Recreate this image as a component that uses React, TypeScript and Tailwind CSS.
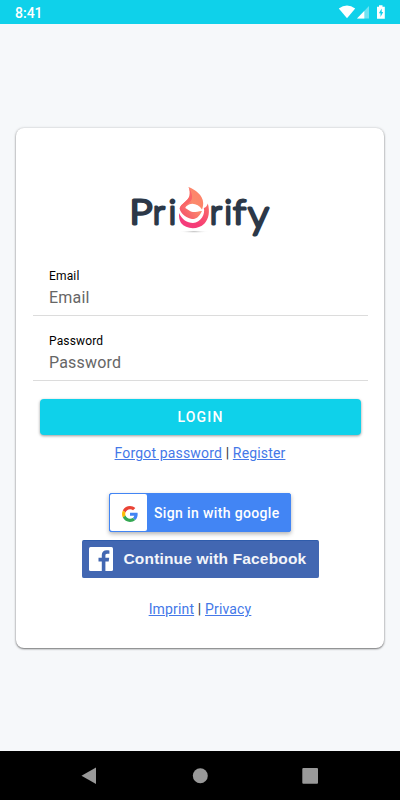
import React from 'react';

const StatusBar: React.FC = () => (
    <header className="h-6 shrink-0 flex items-center justify-between bg-[#0fd1ea] pl-[15px] pr-[14px] text-white">
        <span className="text-sm leading-6 pt-[2px] font-medium">8:41</span>
        <svg width="48" height="16" viewBox="0 0 48 16" fill="white">
            <path d="M0.8 4.6Q9 -1.8 17.2 4.6L9 14.3Z" />
            <path d="M19 14.5L31 2V14.5Z" opacity=".4" />
            <path d="M19 14.5L26.3 7V14.5Z" />
            <path fillRule="evenodd" d="M39 2.8H41V1.2H44.5V2.8H46.8V14.8H39ZM43.7 4.6L40.9 9.3H42.5V13L45.2 8H43.7Z" />
        </svg>
    </header>
);

const Logo: React.FC = () => (
    <svg className="mx-auto" width="144" height="60" viewBox="128 182 144 60">
        <defs>
            <linearGradient id="flame" x1="1" y1="0" x2="0" y2="1">
                <stop offset="0" stopColor="#ff7f68" />
                <stop offset=".45" stopColor="#fb8a6c" />
                <stop offset="1" stopColor="#f4486c" />
            </linearGradient>
            <linearGradient id="bowl" x1="1" y1="0" x2="0" y2="1">
                <stop offset="0" stopColor="#fa7266" />
                <stop offset=".6" stopColor="#f63c75" />
                <stop offset="1" stopColor="#f33b80" />
            </linearGradient>
            <radialGradient id="shade">
                <stop offset="0" stopColor="#bbb" />
                <stop offset="1" stopColor="#fff" stopOpacity="0" />
            </radialGradient>
        </defs>
        <g
            className="font-['Lato',sans-serif] font-light"
            fontSize="33"
            fill="#2c3848"
            stroke="#2c3848"
            strokeWidth="2.8"
            strokeLinejoin="round"
        >
            <text transform="translate(129.4 223.6) scale(1.2 1)">P</text>
            <text x="153 168.8" y="223.6">ri</text>
            <text x="210 224.6" y="223.6">ri</text>
            <text transform="translate(233.2 223.6) scale(1.12 1)">f</text>
            <text transform="translate(248 227.5) scale(1.26 1.2)" strokeWidth="2.4">y</text>
        </g>
        <ellipse cx="194" cy="231.7" rx="15" ry="1.5" fill="url(#shade)" />
        <path d="M188.5 187C195 189.5 203 195 203.2 203C203.2 206 202.6 208 202 209.5C199 204.5 193 202.5 189 204.5C186.5 205.8 185.5 207 185.3 208L190 211C193 213 196 211.8 202 211C199 217 196 219.3 192 219C187 218 180.5 214 179.6 208.5C180.5 204 188 201 189.5 196C190 193 190 190 188.5 187Z" fill="url(#flame)" />
        <path d="M188.5 187C190 190 190 193 189.5 196C188 201 180.5 204 179.6 208.5C182 206.5 185 204.8 187 204C190 202.5 192.5 200 192 196C191.5 192.5 190.5 190 188.5 187Z" fill="#fa6467" />
        <path d="M207.8 203.5C210 211 209 219 204.3 223.7C198 230 186 229.5 181 223C179.3 220 178.8 217 179 213C182 219.5 187 223 193 223C201 222.5 205.5 214 203.8 208C205.8 207.5 207.2 205.8 207.8 203.5Z" fill="url(#bowl)" />
    </svg>
);

const Field: React.FC<{ label: string; type: string }> = ({ label, type }) => (
    <label className="block h-[65px] border-b border-[#dcdcdc] px-4 pt-[17px]">
        <span className="block text-xs leading-4 tracking-[0.15px] text-black">{label}</span>
        <input
            type={type}
            placeholder={label}
            className="block h-[26px] w-full bg-transparent text-base tracking-[0.2px] text-black outline-none placeholder:text-[#666]"
        />
    </label>
);

const Links: React.FC<{ items: [string, string] }> = ({ items }) => (
    <p className="text-center text-sm leading-5 tracking-[0.16px] text-[#333]">
        <a href="#" className="text-[#4478e8] underline">{items[0]}</a>
        {' | '}
        <a href="#" className="text-[#4478e8] underline">{items[1]}</a>
    </p>
);

const GoogleButton: React.FC = () => (
    <button className="mx-auto flex h-[39px] w-[182px] items-center rounded-[2px] border border-[#4285f4] bg-[#4285f4] text-white shadow-[0_2px_4px_rgba(0,0,0,0.3)]">
        <span className="flex h-[37px] w-[37px] items-center justify-center rounded-[2px] bg-white pt-[2px] pl-[3px]">
            <svg width="16" height="16" viewBox="0 0 48 48">
                <path fill="#EA4335" d="M24 9.5c3.54 0 6.71 1.22 9.21 3.6l6.85-6.85C35.9 2.38 30.47 0 24 0 14.62 0 6.51 5.38 2.56 13.22l7.98 6.19C12.43 13.72 17.74 9.5 24 9.5z" />
                <path fill="#4285F4" d="M46.98 24.55c0-1.57-.15-3.09-.38-4.55H24v9.02h12.94c-.58 2.96-2.26 5.48-4.78 7.18l7.73 6c4.51-4.18 7.09-10.36 7.09-17.65z" />
                <path fill="#FBBC05" d="M10.53 28.59c-.48-1.45-.76-2.99-.76-4.59s.27-3.14.76-4.59l-7.98-6.19C.92 16.46 0 20.12 0 24c0 3.88.92 7.54 2.56 10.78l7.97-6.19z" />
                <path fill="#34A853" d="M24 48c6.48 0 11.93-2.13 15.89-5.81l-7.73-6c-2.15 1.45-4.92 2.3-8.16 2.3-6.26 0-11.57-4.22-13.47-9.91l-7.98 6.19C6.51 42.62 14.62 48 24 48z" />
            </svg>
        </span>
        <span className="pl-[7px] text-sm font-medium tracking-[0.36px] whitespace-nowrap">Sign in with google</span>
    </button>
);

const FacebookButton: React.FC = () => (
    <button className="mx-auto mt-2 flex h-[38px] w-[237px] items-center rounded-[2px] border-y border-t-[#2f5cab] border-b-[#4267b2] bg-[#4267b2] pl-[7px] text-white">
        <svg width="24" height="24" viewBox="0 0 24 24">
            <rect width="24" height="24" rx="1.5" fill="#fff" />
            <path d="M12.8 24V14.5H9.5V10.8H12.8V8C12.8 4.9 14.8 3.3 17.6 3.3C18.9 3.3 20 3.4 20.4 3.5V6.8H18.2C16.8 6.8 16.4 7.5 16.4 8.6V10.8H20.2L19.7 14.5H16.4V24Z" fill="#4267b2" />
        </svg>
        <span className="pl-[11px] font-['Liberation_Sans',sans-serif] text-[15.5px] font-bold tracking-[0.17px] whitespace-nowrap text-[#f3f5fa]">Continue with Facebook</span>
    </button>
);

const App: React.FC = () => (
    <div className="flex h-[800px] w-[400px] flex-col bg-[#f6f8fa] font-['Roboto',sans-serif]">
        <StatusBar />
        <main className="flex-1 px-4 pt-[104px]">
            <section className="h-[520px] rounded-lg bg-white pt-[54px] shadow-[0_1px_2px_rgba(0,0,0,0.5),0_0_3px_rgba(0,0,0,0.15)]">
                <Logo />
                <form className="mt-[9px] pr-4 pl-[17px]">
                    <Field label="Email" type="text" />
                    <Field label="Password" type="password" />
                </form>
                <button className="mt-[18px] ml-6 block h-[36px] w-[321px] rounded bg-[#0fd1ea] text-sm font-medium tracking-[1.2px] text-white shadow-[0_1px_3px_rgba(0,0,0,0.4)]">
                    LOGIN
                </button>
                <div className="mt-[8px]">
                    <Links items={['Forgot password', 'Register']} />
                </div>
                <div className="mt-[30px]">
                    <GoogleButton />
                    <FacebookButton />
                </div>
                <div className="mt-[21px]">
                    <Links items={['Imprint', 'Privacy']} />
                </div>
            </section>
        </main>
        <nav className="flex h-[49px] items-center bg-black">
            <svg width="400" height="49" viewBox="0 0 400 49" fill="#999">
                <path d="M96 16.5V33L81.5 24.7Z" />
                <circle cx="200.3" cy="24.7" r="7.5" />
                <rect x="302.3" y="17" width="15.7" height="15.7" rx="1" />
            </svg>
        </nav>
    </div>
);

export default App;
